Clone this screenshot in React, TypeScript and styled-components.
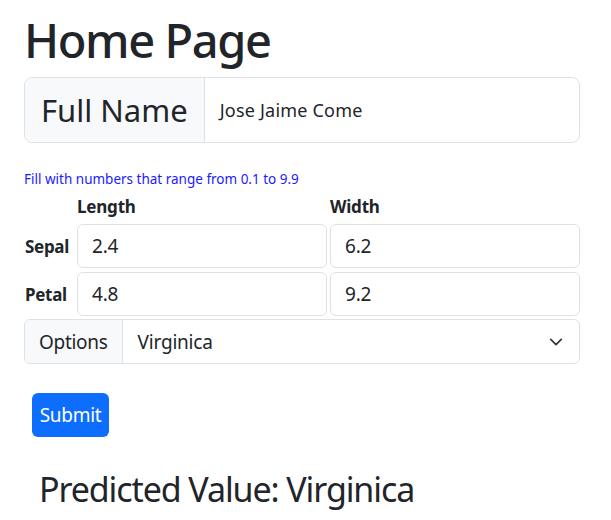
import React from "react";
import styled, { createGlobalStyle } from "styled-components";

const Global = createGlobalStyle`
  html, body { margin: 0; padding: 0; background: #fff; }
  body {
    font-family: "Noto Sans", "Open Sans", sans-serif;
    color: #212529;
  }
  * { box-sizing: border-box; }
`;

const Page = styled.main`
  width: 556px;
  margin-left: 24px;
  display: flex;
  flex-direction: column;
`;

const Title = styled.h1`
  margin: 10px 0 0 0;
  font-size: 47px;
  line-height: 60px;
  font-weight: 500;
  letter-spacing: -1.4px;
`;

const Group = styled.div<{ $h: number; $r: number; $mt: number }>`
  display: flex;
  height: ${(p) => p.$h}px;
  margin-top: ${(p) => p.$mt}px;
  border: 1px solid #dee2e6;
  border-radius: ${(p) => p.$r}px;
  overflow: hidden;
  background: #fff;
`;

const Addon = styled.span<{ $size: number; $pad: number; $ls: number }>`
  display: flex;
  align-items: center;
  padding: 0 ${(p) => p.$pad}px;
  background: #f8f9fa;
  border-right: 1px solid #dee2e6;
  font-size: ${(p) => p.$size}px;
  white-space: nowrap;
  letter-spacing: ${(p) => p.$ls}px;
`;

const FieldText = styled.span<{ $size: number; $ls: number }>`
  flex: 1;
  display: flex;
  align-items: center;
  padding: 0 14px 0 15px;
  font-size: ${(p) => p.$size}px;
  letter-spacing: ${(p) => p.$ls}px;
`;

const Hint = styled.small`
  display: block;
  margin-top: 27px;
  font-size: 13.5px;
  line-height: 19px;
  color: #1b1bff;
`;

const Grid = styled.div`
  display: grid;
  grid-template-columns: 50px 1fr 1fr;
  grid-template-rows: 26px 44px 44px;
  column-gap: 3px;
  row-gap: 4px;
  margin-top: 5px;
`;

const ColHead = styled.div`
  font-size: 17px;
  font-weight: 700;
  line-height: 26px;
  letter-spacing: -0.2px;
  align-self: end;
`;

const RowHead = styled.div`
  display: flex;
  align-items: center;
  font-size: 17px;
  font-weight: 700;
  padding-left: 1px;
  letter-spacing: -0.3px;
  margin-right: -3px;
  white-space: nowrap;
`;

const NumBox = styled.div`
  display: flex;
  align-items: center;
  border: 1px solid #dee2e6;
  border-radius: 6px;
  padding: 0 14px;
  font-size: 19px;
  letter-spacing: -0.2px;
`;

const Chevron = styled.svg`
  width: 14px;
  height: 14px;
  margin-right: 16px;
  align-self: center;
`;

const SubmitRow = styled.div`
  margin-top: 29px;
  padding-left: 8px;
`;

const SubmitButton = styled.button`
  height: 44px;
  width: 77px;
  border: 0;
  border-radius: 6px;
  background: #0d6efd;
  color: #fff;
  font-family: inherit;
  font-size: 19px;
  letter-spacing: -0.3px;
  padding: 0;
`;

const Result = styled.h3`
  margin: 30px 0 0 15px;
  font-size: 34px;
  line-height: 44px;
  font-weight: 400;
  letter-spacing: -1.1px;
`;

export default function App() {
  return (
    <>
      <Global />
      <Page>
        <Title>Home Page</Title>
        <Group $h={66} $r={8} $mt={7}>
          <Addon $size={31} $pad={16} $ls={0}>Full Name</Addon>
          <FieldText $size={18} $ls={0.2}>Jose Jaime Come</FieldText>
        </Group>
        <Hint>Fill with numbers that range from 0.1 to 9.9</Hint>
        <Grid>
          <span />
          <ColHead>Length</ColHead>
          <ColHead>Width</ColHead>
          <RowHead>Sepal</RowHead>
          <NumBox>2.4</NumBox>
          <NumBox>6.2</NumBox>
          <RowHead>Petal</RowHead>
          <NumBox>4.8</NumBox>
          <NumBox>9.2</NumBox>
        </Grid>
        <Group $h={45} $r={6} $mt={3}>
          <Addon $size={19} $pad={14} $ls={-0.3}>Options</Addon>
          <FieldText $size={19} $ls={-0.2}>Virginica</FieldText>
          <Chevron viewBox="0 0 16 16">
            <path
              d="M2 5l6 6 6-6"
              fill="none"
              stroke="#343a40"
              strokeWidth="2"
              strokeLinecap="round"
              strokeLinejoin="round"
            />
          </Chevron>
        </Group>
        <SubmitRow>
          <SubmitButton>Submit</SubmitButton>
        </SubmitRow>
        <Result>Predicted Value: Virginica</Result>
      </Page>
    </>
  );
}
